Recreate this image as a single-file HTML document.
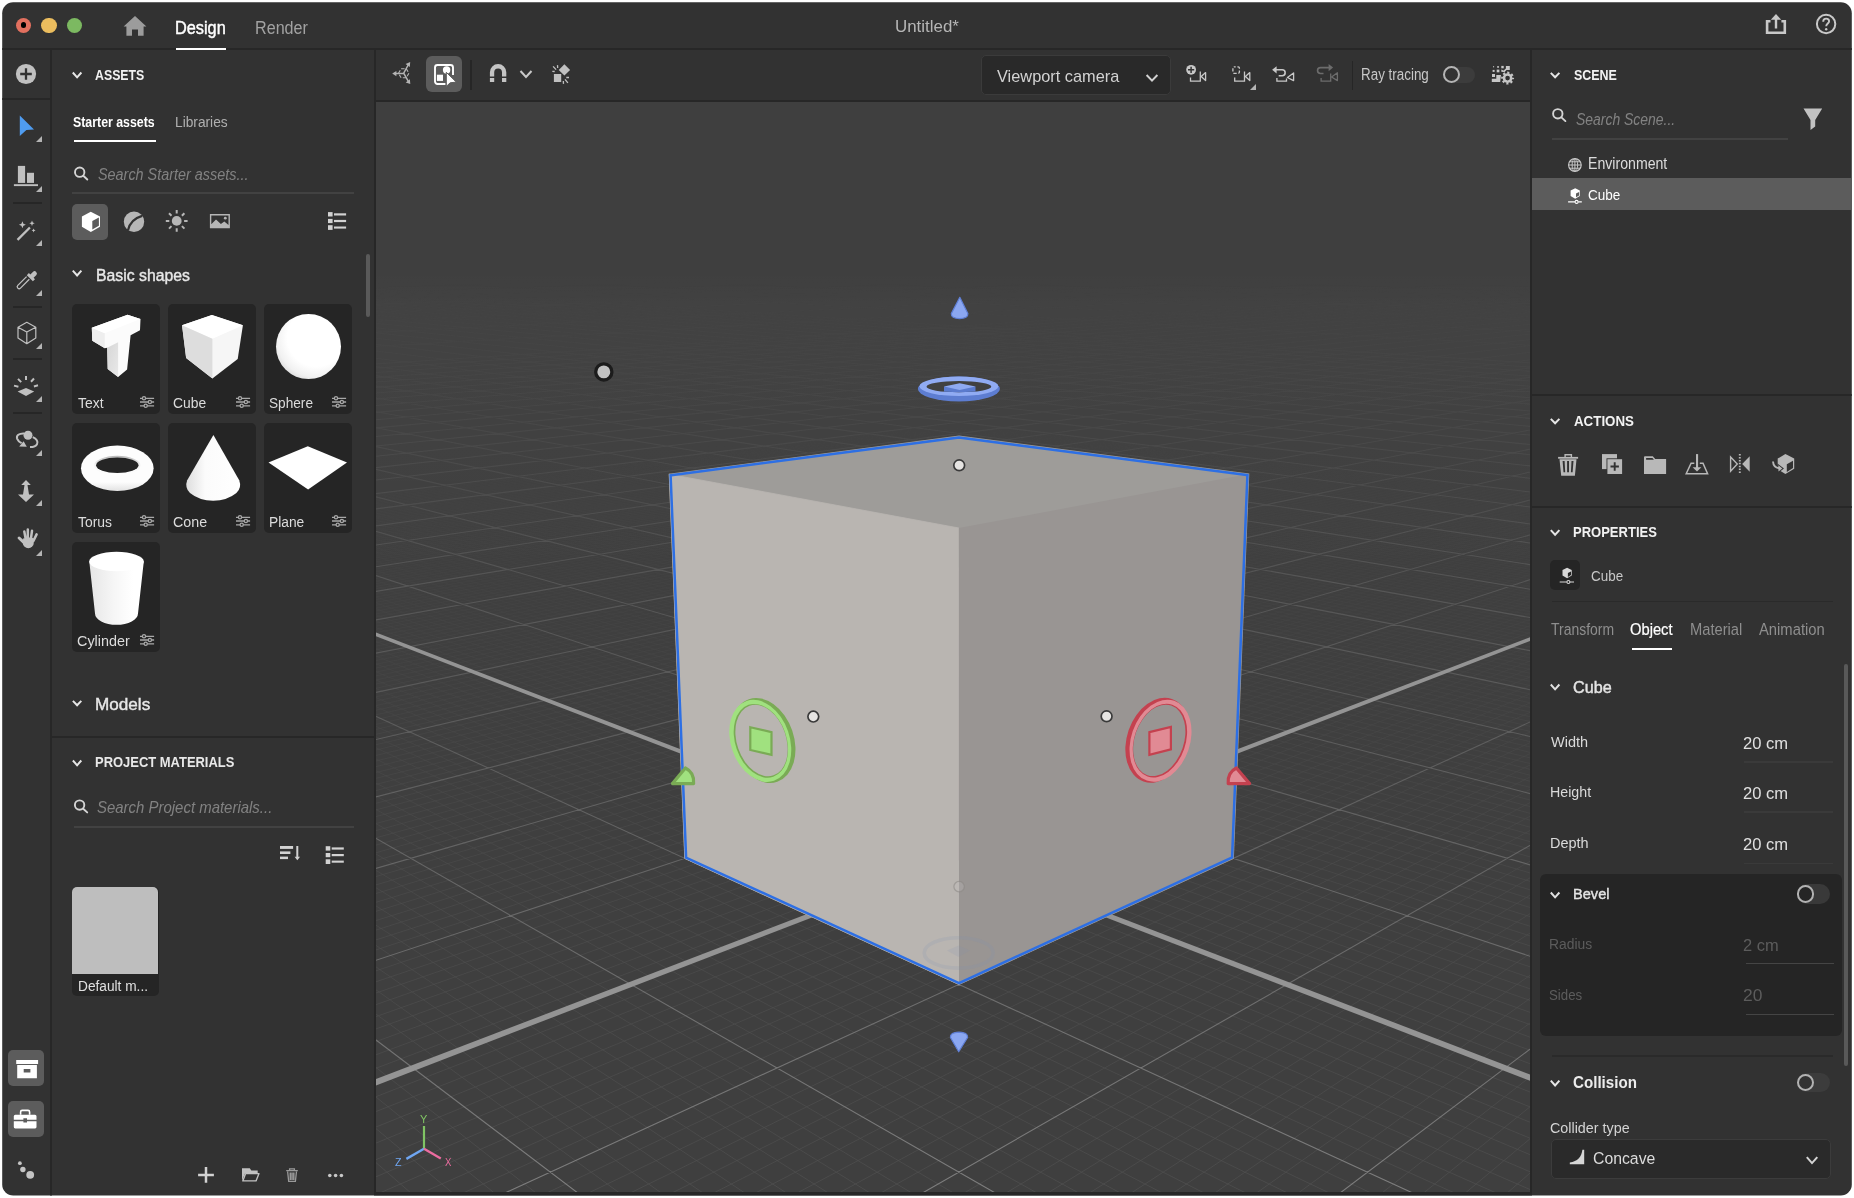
<!DOCTYPE html>
<html lang="en">
<head>
<meta charset="utf-8">
<title>Untitled* - 3D Stager</title>
<style>
html,body{margin:0;padding:0;background:#fff;}
body{width:1854px;height:1198px;position:relative;overflow:hidden;font-family:"Liberation Sans",sans-serif;}
#win{position:absolute;left:0;top:0;width:1854px;height:1198px;background:#323232;clip-path:inset(2.2px 2.2px 2.6px 2.2px round 11px);overflow:hidden;}
#win div,#win span,#win svg{position:absolute;}
.t{white-space:pre;line-height:1;transform-origin:0 50%;display:block;}
.b{background:#272727;}
.card{background:#252525;border-radius:5px;width:88px;height:110px;}
.sel{background:#5c5c5c;border-radius:5px;}
.ul{background:#fff;height:2px;}
.ln{height:1px;background:#474747;}
.tri{width:0;height:0;border-left:6px solid transparent;border-bottom:6px solid #b4b4b4;}
.sep{height:1.5px;background:#262626;left:12.5px;width:29.5px;}
svg{overflow:visible;}
</style>
</head>
<body>
<div id="win">
<!-- structural borders -->
<div class="b" style="left:0;top:48px;width:1854px;height:2px"></div>
<div class="b" style="left:50px;top:50px;width:2px;height:1148px"></div>
<div class="b" style="left:0;top:98px;width:50px;height:2px"></div>
<div class="b" style="left:374px;top:50px;width:2px;height:1148px"></div>
<div class="b" style="left:376px;top:100px;width:1154px;height:2px"></div>
<div class="b" style="left:1530px;top:50px;width:2px;height:1148px"></div>
<div class="b" style="left:376px;top:1192px;width:1154px;height:6px"></div>
<div class="b" style="left:52px;top:735.5px;width:322px;height:2px"></div>
<div class="b" style="left:1532px;top:393.5px;width:322px;height:2px"></div>
<div class="b" style="left:1532px;top:505.5px;width:322px;height:2px"></div>

<!-- title bar -->
<div style="left:15.7px;top:17.5px;width:15.6px;height:15.6px;border-radius:50%;background:#e2705f"></div>
<div style="left:20.6px;top:22.4px;width:5.8px;height:5.8px;border-radius:50%;background:#000"></div>
<div style="left:41.2px;top:17.5px;width:15.6px;height:15.6px;border-radius:50%;background:#ebbd5e"></div>
<div style="left:66.7px;top:17.5px;width:15.6px;height:15.6px;border-radius:50%;background:#7cb961"></div>
<div class="ul" style="left:176px;top:48px;width:50px"></div>

<!-- left tool bar -->
<div class="sep" style="top:202.3px"></div>
<div class="sep" style="top:306.3px"></div>
<div class="sep" style="top:358.2px"></div>
<div class="sep" style="top:412px"></div>
<div class="tri" style="left:36px;top:136px"></div>
<div class="tri" style="left:36px;top:186px"></div>
<div class="tri" style="left:36px;top:240px"></div>
<div class="tri" style="left:36px;top:290px"></div>
<div class="tri" style="left:36px;top:342.5px"></div>
<div class="tri" style="left:36px;top:396px"></div>
<div class="tri" style="left:36px;top:450px"></div>
<div class="tri" style="left:36px;top:500px"></div>
<div class="tri" style="left:36px;top:550px"></div>
<div class="sel" style="left:8px;top:1050px;width:36px;height:36px"></div>
<div class="sel" style="left:8px;top:1100.5px;width:36px;height:36px"></div>

<!-- assets panel -->
<div class="ul" style="left:73.8px;top:140px;width:82.2px"></div>
<div class="ln" style="left:72px;top:191.9px;width:282px;height:2.2px;background:#424242"></div>
<div class="sel" style="left:72px;top:204px;width:36px;height:36px"></div>
<div style="left:366px;top:253.5px;width:3.6px;height:63px;border-radius:2px;background:#5a5a5a"></div>
<div class="card" style="left:72px;top:304px"></div>
<div class="card" style="left:168px;top:304px"></div>
<div class="card" style="left:264px;top:304px"></div>
<div class="card" style="left:72px;top:423px"></div>
<div class="card" style="left:168px;top:423px"></div>
<div class="card" style="left:264px;top:423px"></div>
<div class="card" style="left:72px;top:542px"></div>
<div class="ln" style="left:74px;top:826px;width:280px;height:2.2px;background:#424242"></div>
<div style="left:72px;top:887px;width:87px;height:108.5px;border-radius:5px;background:#252525"></div>
<div style="left:72px;top:887px;width:86px;height:87px;border-radius:5px 5px 0 0;background:#bebebe"></div>

<!-- viewport tool bar -->
<div class="sel" style="left:426px;top:55.8px;width:36px;height:36px;border-radius:6px"></div>
<div style="left:470.2px;top:60.3px;width:1.6px;height:29.5px;background:#262626"></div>
<div style="left:981.3px;top:55.3px;width:187.3px;height:37.6px;border:1px solid #3b3b3b;border-radius:5px;background:#292929"></div>
<div style="left:1351.8px;top:61px;width:1.6px;height:29px;background:#262626"></div>
<div style="left:1443.4px;top:67px;width:31.6px;height:16px;border-radius:8px;background:#3c3c3c"></div>
<div style="left:1442.8px;top:66.3px;width:13.2px;height:13.2px;border:2px solid #b4b4b4;border-radius:50%;background:#323232"></div>
<div class="tri" style="left:1249.8px;top:84px"></div>

<svg width="1154" height="1090" viewBox="0 0 1154 1090" style="position:absolute;left:376px;top:102px;display:block;overflow:hidden">
<defs>
<linearGradient id="mfade" x1="0" y1="0" x2="0" y2="1"><stop offset="0.26" stop-color="#000"/><stop offset="0.46" stop-color="#444"/><stop offset="0.73" stop-color="#bbb"/><stop offset="1" stop-color="#fff"/></linearGradient>
<linearGradient id="Mfade" x1="0" y1="0" x2="0" y2="1"><stop offset="0.165" stop-color="#000"/><stop offset="0.27" stop-color="#141414"/><stop offset="0.36" stop-color="#343434"/><stop offset="0.44" stop-color="#5c5c5c"/><stop offset="0.55" stop-color="#6e6e6e"/><stop offset="0.82" stop-color="#bcbcbc"/><stop offset="1" stop-color="#fff"/></linearGradient>
<linearGradient id="haze" x1="0" y1="0" x2="0" y2="1"><stop offset="0.155" stop-color="#fff" stop-opacity="0"/><stop offset="0.185" stop-color="#fff" stop-opacity="0.016"/><stop offset="0.24" stop-color="#fff" stop-opacity="0.016"/><stop offset="0.45" stop-color="#fff" stop-opacity="0"/></linearGradient>
<mask id="mm" maskUnits="userSpaceOnUse" x="0" y="0" width="1154" height="1090"><rect width="1154" height="1090" fill="url(#mfade)"/></mask>
<mask id="MM" maskUnits="userSpaceOnUse" x="0" y="0" width="1154" height="1090"><rect width="1154" height="1090" fill="url(#Mfade)"/></mask>
</defs>
<rect width="1154" height="1090" fill="#3f3f3f"/>
<rect width="1154" height="1090" fill="url(#haze)"/>
<g mask="url(#mm)"><path d="M587.7 320.7L-20 395.6M578.9 320.7L1174 393.8M592.1 321.3L-20 397M574.5 321.3L1174 395.3M596.5 321.8L-20 398.5M570.1 321.8L1174 396.8M600.9 322.3L-20 400.1M565.6 322.3L1174 398.3M605.4 322.9L-20 401.6M561.2 322.9L1174 399.8M609.9 323.4L-20 403.1M556.7 323.4L1174 401.3M614.4 324L-20 404.7M552.1 324L1174 402.9M619 324.5L-20 406.3M547.6 324.6L1174 404.5M623.6 325.1L-20 407.9M543 325.1L1174 406M632.8 326.2L-20 411.1M533.8 326.2L1174 409.3M637.4 326.8L-20 412.7M529.2 326.8L1174 410.9M642.1 327.4L-20 414.4M524.5 327.4L1174 412.6M646.8 327.9L-20 416.1M519.8 328L1174 414.2M651.5 328.5L-20 417.8M515.1 328.5L1174 415.9M656.2 329.1L-20 419.5M510.3 329.1L1174 417.7M661 329.7L-20 421.3M505.6 329.7L1174 419.4M665.8 330.3L-20 423M500.8 330.3L1174 421.1M670.6 330.9L-20 424.8M495.9 330.9L1174 422.9M680.4 332L-20 428.5M486.2 332.1L1174 426.5M685.3 332.6L-20 430.3M481.3 332.7L1174 428.4M690.2 333.2L-20 432.2M476.4 333.3L1174 430.2M695.2 333.8L-20 434.1M471.4 333.9L1174 432.1M700.2 334.5L-20 436M466.4 334.5L1174 434M705.2 335.1L-20 437.9M461.4 335.1L1174 436M710.2 335.7L-20 439.9M456.3 335.7L1174 437.9M715.3 336.3L-20 441.9M451.3 336.4L1174 439.9M720.4 336.9L-20 443.9M446.2 337L1174 441.9M730.7 338.2L-20 448M435.9 338.2L1174 446M735.9 338.8L-20 450.1M430.7 338.9L1174 448M741.1 339.5L-20 452.2M425.5 339.5L1174 450.1M746.3 340.1L-20 454.3M420.2 340.2L1174 452.3M751.6 340.7L-20 456.5M414.9 340.8L1174 454.4M756.9 341.4L-20 458.7M409.6 341.5L1174 456.6M762.3 342L-20 460.9M404.3 342.1L1174 458.8M767.7 342.7L-20 463.2M398.9 342.8L1174 461.1M773.1 343.4L-20 465.5M393.5 343.4L1174 463.4M784 344.7L-20 470.1M382.6 344.8L1174 468M789.5 345.4L-20 472.5M377.1 345.4L1174 470.4M795 346L-20 474.9M371.6 346.1L1174 472.8M800.6 346.7L-20 477.4M366 346.8L1174 475.2M806.2 347.4L-20 479.8M360.4 347.5L1174 477.6M811.8 348.1L-20 482.3M354.8 348.2L1174 480.1M817.5 348.8L-20 484.9M349.1 348.9L1174 482.7M823.2 349.5L-20 487.5M343.4 349.6L1174 485.2M828.9 350.2L-20 490.1M337.7 350.3L1174 487.8M840.5 351.6L-20 495.4M326.1 351.7L1174 493.2M846.3 352.3L-20 498.2M320.3 352.4L1174 495.9M852.2 353L-20 500.9M314.4 353.1L1174 498.6M858.1 353.8L-20 503.7M308.5 353.9L1174 501.4M864 354.5L-20 506.6M302.6 354.6L1174 504.3M870 355.2L-20 509.5M296.6 355.3L1174 507.2M876 355.9L-20 512.4M290.6 356.1L1174 510.1M882.1 356.7L-20 515.4M284.5 356.8L1174 513.1M888.2 357.4L-20 518.4M278.4 357.5L1174 516.1M900.5 358.9L-20 524.6M266.1 359L1174 522.2M906.7 359.7L-20 527.8M259.9 359.8L1174 525.4M912.9 360.5L-20 531M253.7 360.6L1174 528.6M919.2 361.2L-20 534.3M247.4 361.3L1174 531.8M925.6 362L-20 537.6M241 362.1L1174 535.1M931.9 362.8L-20 541M234.7 362.9L1174 538.5M938.3 363.6L-20 544.4M228.3 363.7L1174 541.9M944.8 364.4L-20 547.9M221.8 364.5L1174 545.4M951.3 365.1L-20 551.4M215.3 365.3L1174 548.9M964.4 366.7L-20 558.7M202.2 366.9L1174 556.1M971 367.6L-20 562.4M195.6 367.7L1174 559.8M977.7 368.4L-20 566.2M189 368.5L1174 563.6M984.4 369.2L-20 570.1M182.3 369.3L1174 567.4M991.1 370L-20 574M175.5 370.1L1174 571.3M997.9 370.8L-20 578M168.7 371L1174 575.3M1004.7 371.7L-20 582M161.9 371.8L1174 579.3M1011.6 372.5L-20 586.2M155 372.7L1174 583.5M1018.5 373.4L-20 590.4M148.1 373.5L1174 587.6M1032.5 375.1L-20 599M134.1 375.2L1174 596.2M1039.6 375.9L-20 603.4M127 376.1L1174 600.6M1046.7 376.8L-20 607.9M119.9 377L1174 605.1M1053.9 377.7L-20 612.6M112.8 377.8L1174 609.7M1061.1 378.6L-20 617.2M105.6 378.7L1174 614.4M1068.3 379.4L-20 622M98.3 379.6L1174 619.1M1075.6 380.3L-20 626.9M91 380.5L1174 624M1083 381.2L-20 631.9M83.7 381.4L1174 628.9M1090.4 382.1L-20 636.9M76.3 382.3L1174 634M1105.4 384L-20 647.4M61.3 384.1L1174 644.3M1112.9 384.9L-20 652.7M53.7 385.1L1174 649.7M1120.5 385.8L-20 658.2M46.1 386L1174 655.1M1128.2 386.8L-20 663.8M38.5 386.9L1174 660.7M1135.9 387.7L-20 669.5M30.8 387.9L1174 666.4M1143.7 388.7L-20 675.4M23 388.8L1174 672.2M1151.5 389.6L-20 681.3M15.2 389.8L1174 678.1M1159.4 390.6L-20 687.4M7.3 390.8L1174 684.2M1167.4 391.5L-20 693.6M-0.7 391.7L1174 690.4M1174 396L-20 706.5M-16.7 393.7L1174 703.2M1174 399.1L-20 713.1M-20 396L1174 709.8M1174 402.3L-20 719.9M-20 399.1L1174 716.6M1174 405.6L-20 726.9M-20 402.4L1174 723.5M1174 409L-20 734M-20 405.7L1174 730.6M1174 412.5L-20 741.3M-20 409.1L1174 737.8M1174 416L-20 748.7M-20 412.6L1174 745.2M1174 419.6L-20 756.4M-20 416.2L1174 752.8M1174 423.3L-20 764.2M-20 419.9L1174 760.6M1174 431L-20 780.4M-20 427.5L1174 776.8M1174 435L-20 788.8M-20 431.4L1174 785.2M1174 439.1L-20 797.5M-20 435.5L1174 793.8M1174 443.3L-20 806.4M-20 439.7L1174 802.6M1174 447.6L-20 815.5M-20 443.9L1174 811.6M1174 452.1L-20 824.8M-20 448.3L1174 820.9M1174 456.6L-20 834.4M-20 452.8L1174 830.5M1174 461.3L-20 844.3M-20 457.4L1174 840.3M1174 466.1L-20 854.4M-20 462.2L1174 850.4M1174 476.1L-20 875.5M-20 472.1L1174 871.5M1174 481.4L-20 886.6M-20 477.3L1174 882.4M1174 486.8L-20 897.9M-20 482.6L1174 893.7M1174 492.3L-20 909.6M-20 488.1L1174 905.4M1174 498L-20 921.7M-20 493.7L1174 917.4M1174 503.9L-20 934.1M-20 499.5L1174 929.8M1174 510L-20 946.9M-20 505.5L1174 942.5M1174 516.3L-20 960.2M-20 511.7L1174 955.7M1174 522.8L-20 973.8M-20 518.1L1174 969.3M1174 536.4L-20 1002.5M-20 531.6L1174 997.8M1174 543.5L-20 1017.5M-20 538.7L1174 1012.8M1174 550.9L-20 1033.1M-20 546L1174 1028.3M1174 558.5L-20 1049.3M-20 553.5L1174 1044.4M1174 566.5L-20 1066M-20 561.4L1174 1061M1174 574.7L-20 1083.3M-20 569.5L1174 1078.3M1174 583.2L-20 1101.3M-20 577.9L1174 1096.2M1174 592.1L2.5 1110M-20 586.7L1163.3 1110M1174 601.3L45 1110M-20 595.7L1120.7 1110M1174 620.7L130.1 1110M-20 615L1035.6 1110M1174 631.1L172.7 1110M-20 625.2L993 1110M1174 641.8L215.3 1110M-20 635.9L950.4 1110M1174 653.1L257.8 1110M-20 647L907.9 1110M1174 664.8L300.4 1110M-20 658.6L865.3 1110M1174 677L343 1110M-20 670.7L822.7 1110M1174 689.9L385.5 1110M-20 683.3L780.1 1110M1174 703.3L428.1 1110M-20 696.6L737.6 1110M1174 717.3L470.7 1110M-20 710.5L695 1110M1174 747.5L555.8 1110M-20 740.3L609.9 1110M1174 763.8L598.4 1110M-20 756.4L567.3 1110M1174 780.9L641 1110M-20 773.4L524.8 1110M1174 799L683.5 1110M-20 791.2L482.2 1110M1174 818L726.1 1110M-20 810.1L439.6 1110M1174 838.2L768.7 1110M-20 830L397.1 1110M1174 859.6L811.3 1110M-20 851.1L354.5 1110M1174 882.2L853.8 1110M-20 873.6L312 1110M1174 906.3L896.4 1110M-20 897.4L269.4 1110M1174 959.3L981.6 1110M-20 949.8L184.3 1110M1174 988.6L1024.1 1110M-20 978.8L141.8 1110M1174 1020L1066.7 1110M-20 1009.8L99.2 1110M1174 1053.7L1109.3 1110M-20 1043.2L56.7 1110M1174 1090L1151.9 1110M-20 1079.1L14.1 1110" stroke="#545454" stroke-width="1" fill="none" opacity="0.6"/></g>
<g mask="url(#MM)"><path d="M583.4 141.1L-20 150.3M583.4 141.1L1174 149.8M610.5 141.5L-20 151.4M556.2 141.5L1174 150.9M638.6 141.9L-20 152.6M528.2 142L1174 152.1M667.5 142.4L-20 153.9M499.2 142.4L1174 153.4M697.5 142.8L-20 155.3M469.3 142.9L1174 154.8M728.5 143.3L-20 156.8M438.3 143.3L1174 156.3M760.6 143.7L-20 158.4M406.1 143.8L1174 157.9M793.9 144.2L-20 160.1M372.9 144.3L1174 159.6M828.4 144.7L-20 162M338.4 144.8L1174 161.5M864.2 145.3L-20 164.1M302.6 145.4L1174 163.5M901.4 145.8L-20 166.3M265.5 146L1174 165.7M940 146.4L-20 168.8M226.9 146.5L1174 168.2M980.1 147L-20 171.5M186.8 147.2L1174 170.9M1021.9 147.6L-20 174.5M145 147.8L1174 173.9M1065.3 148.2L-20 177.9M101.6 148.4L1174 177.3M1110.7 148.9L-20 181.7M56.3 149.1L1174 181.1M1157.9 149.6L-20 186M9 149.9L1174 185.3M1174 151.4L-20 190.9M-20 151.3L1174 190.2M1174 154.1L-20 196.5M-20 153.9L1174 195.8M1174 157.2L-20 203.1M-20 157L1174 202.4M1174 160.9L-20 210.8M-20 160.6L1174 210M1174 165.3L-20 220.1M-20 164.9L1174 219.2M1174 170.6L-20 231.4M-20 170.2L1174 230.4M1174 177.2L-20 245.4M-20 176.8L1174 244.4M1174 185.7L-20 263.2M-20 185.2L1174 262.2M1174 187.7L-20 267.4M-20 187.1L1174 266.3M1174 189.8L-20 271.9M-20 189.2L1174 270.7M1174 192L-20 276.6M-20 191.4L1174 275.4M1174 194.4L-20 281.5M-20 193.7L1174 280.4M1174 196.9L-20 286.9M-20 196.2L1174 285.7M1174 199.6L-20 292.5M-20 198.9L1174 291.3M1174 202.5L-20 298.6M-20 201.7L1174 297.3M1174 205.6L-20 305.1M-20 204.8L1174 303.8M1174 208.9L-20 312.1M-20 208L1174 310.7M1174 212.4L-20 319.6M-20 211.5L1174 318.2M1174 216.3L-20 327.7M-20 215.3L1174 326.2M1174 220.4L-20 336.4M-20 219.4L1174 335M1174 225L-20 346M-20 223.9L1174 344.5M1174 229.9L-20 356.4M-20 228.8L1174 354.8M1174 235.3L-20 367.8M-20 234.1L1174 366.1M1174 241.2L-20 380.3M-20 240L1174 378.6M1174 247.8L-20 394.1M-20 246.5L1174 392.4M1174 255.1L-20 409.5M-20 253.7L1174 407.6M1174 263.2L-20 426.6M-20 261.7L1174 424.7M1174 272.4L-20 445.9M-20 270.7L1174 443.9M1174 282.7L-20 467.8M-20 281L1174 465.7M1174 294.6L-20 492.7M-20 292.7L1174 490.5M1174 308.2L-20 521.5M-20 306.2L1174 519.1M1174 324.1L-20 555M-20 321.9L1174 552.5M1174 342.9L-20 594.6M-20 340.4L1174 591.9M1174 365.4L-20 642.1M-20 362.7L1174 639.1M1174 392.9L-20 700M-20 389.8L1174 696.7M1174 427.1L-20 772.2M-20 423.6L1174 768.6M1174 471.1L-20 864.8M-20 467.1L1174 860.8M1174 610.8L87.6 1110M-20 605.2L1078.1 1110M1174 732L513.2 1110M-20 725L652.5 1110M1174 932L939 1110M-20 922.8L226.9 1110" stroke="#8e8e8e" stroke-width="1.1" fill="none" opacity="0.8"/></g>
<polygon points="-6,528.3 1160,974.8 1160,981.1 -6,532" fill="#949494"/><polygon points="-6,979.4 1160,532.9 1160,536.7 -6,985.7" fill="#949494"/>
<polygon points="583,334.2 872.7,372.1 857.3,756.3 583,882.4 308.9,756.4 293.3,372.2" fill="#9e9c99" stroke="#9e9c99" stroke-width="1.2"/>
<polygon points="293.3,372.2 582.9,426 583,882.4 308.9,756.4" fill="#b9b5b1" stroke="#b9b5b1" stroke-width="0.8"/>
<polygon points="582.9,426 872.7,372.1 857.3,756.3 583,882.4" fill="#999593"/>
<clipPath id="cc"><polygon points="583,334.2 872.7,372.1 857.3,756.3 583,882.4 308.9,756.4 293.3,372.2"/></clipPath>
<polygon points="583,334.2 872.7,372.1 857.3,756.3 583,882.4 308.9,756.4 293.3,372.2" fill="none" stroke="#2d6fe4" stroke-width="5" stroke-linejoin="miter" clip-path="url(#cc)"/>
<g transform="translate(-376,-102)">
<!-- light handle -->
<circle cx="603.8" cy="371.9" r="8.1" fill="#c2c2c2" stroke="#1c1c1c" stroke-width="3.3"/>
<!-- top cone -->
<path d="M959.8 297.3 L951.3 313.6 Q951 318.4 959.6 318.6 Q968.2 318.4 967.9 313.6 Z" fill="#8ba7f1" stroke="#5f7fd6" stroke-width="1.2" stroke-linejoin="round"/>
<!-- top ring -->
<ellipse cx="958.9" cy="389" rx="41" ry="12.4" fill="#5d7dd1"/>
<ellipse cx="958.9" cy="386.3" rx="39.4" ry="9.7" fill="#90abf3"/>
<ellipse cx="958.9" cy="386.7" rx="32.4" ry="5.6" fill="#414141"/>
<clipPath id="rh"><ellipse cx="958.9" cy="386.7" rx="32.4" ry="5.6"/></clipPath>
<g clip-path="url(#rh)"><path d="M944 386.5H975.5V394H944Z" fill="#5b7bce"/></g>
<path d="M944 386.5L959.7 383.3L975.5 386.5L959.7 390Z" fill="#8ea9f1"/>
<!-- bottom cone -->
<path d="M958.7 1051.8 L950.4 1037.5 Q950 1032.3 959 1032.1 Q968 1032.3 967.6 1037.5 Z" fill="#8ba7f1" stroke="#5f7fd6" stroke-width="1.2" stroke-linejoin="round"/>
<!-- faint through-cube ring & dot -->
<ellipse cx="958.7" cy="952.9" rx="34.5" ry="15.2" fill="none" stroke="#7f8fb4" stroke-opacity="0.16" stroke-width="3.6"/>
<path d="M947 950.5L958.5 945.5L970 950.5L958.5 957Z" fill="#7f8fb4" fill-opacity="0.14"/>
<circle cx="959.1" cy="886.6" r="5.2" fill="#c8c5c2" fill-opacity="0.25" stroke="#8a8784" stroke-opacity="0.55" stroke-width="1.3"/>
<!-- green ring -->
<g transform="rotate(-19 761.4 740.5)">
<ellipse cx="763" cy="741" rx="30.8" ry="43.6" fill="#7aab55"/>
<ellipse cx="760.2" cy="740.5" rx="29.4" ry="42.2" fill="#a0e17f"/>
<ellipse cx="760.8" cy="740.6" rx="25.6" ry="38" fill="#7aab55"/>
<ellipse cx="761.5" cy="740.6" rx="24.6" ry="36.8" fill="#b9b5b1"/>
</g>
<path d="M750.3 727.2L771.5 732.1V754.9L750.3 750Z" fill="#a0e17f" stroke="#7aab55" stroke-width="2.2" stroke-linejoin="miter"/>
<path d="M672.5 783.6L685.4 768Q694.5 772.5 693.6 783.6Z" fill="#a0e17f" stroke="#7aab55" stroke-width="3.2" stroke-linejoin="round"/>
<!-- red ring -->
<g transform="rotate(19 1159.4 740.3)">
<ellipse cx="1157.8" cy="740.8" rx="30.8" ry="43.6" fill="#c4414f"/>
<ellipse cx="1160.6" cy="740.3" rx="29.4" ry="42.2" fill="#e18a94"/>
<ellipse cx="1160" cy="740.4" rx="25.6" ry="38" fill="#c4414f"/>
<ellipse cx="1159.3" cy="740.4" rx="24.600" ry="36.800" fill="#999593"/>
</g>
<path d="M1149.4 732.1L1170.9 726.9V749.4L1149.4 754.9Z" fill="#e18a94" stroke="#c4414f" stroke-width="2.2" stroke-linejoin="miter"/>
<path d="M1249.6 783.6L1236.4 768Q1227.3 772.5 1228.2 783.6Z" fill="#e18a94" stroke="#c4414f" stroke-width="3.2" stroke-linejoin="round"/>
<!-- face handle dots -->
<circle cx="959.2" cy="465.3" r="5.4" fill="#e6e4e2" stroke="#3a3a3a" stroke-width="1.7"/>
<circle cx="813.3" cy="716.6" r="5.4" fill="#e6e4e2" stroke="#3a3a3a" stroke-width="1.7"/>
<circle cx="1106.6" cy="716.3" r="5.4" fill="#e6e4e2" stroke="#3a3a3a" stroke-width="1.7"/>
<!-- axis gizmo -->
<path d="M424 1148.8V1126" stroke="#80c464" stroke-width="2.2" fill="none"/>
<path d="M424 1148.8L406.4 1158.9" stroke="#6fa6f2" stroke-width="2.4" fill="none"/>
<path d="M424 1148.8L440.8 1158.5" stroke="#ec6ca0" stroke-width="2.4" fill="none"/>
</g>

</svg>

<!-- right panel -->
<div class="ln" style="left:1551.8px;top:137.9px;width:236px;height:2.2px;background:#424242"></div>
<div style="left:1532px;top:178px;width:322px;height:31.6px;background:#5c5c5c"></div>
<div style="left:1550px;top:560.2px;width:30px;height:30px;border-radius:5px;background:#252525"></div>
<div class="ln" style="left:1551.8px;top:600.6px;width:281.5px;height:1.5px;background:#2a2a2a"></div>
<div class="ul" style="left:1631.9px;top:648.1px;width:40px"></div>
<div style="left:1843.7px;top:664.4px;width:4.2px;height:401.4px;border-radius:2px;background:#595959"></div>
<div class="ln" style="left:1744px;top:761px;width:88.5px;height:1.5px;background:#3a3a3a"></div>
<div class="ln" style="left:1744px;top:811.2px;width:88.5px;height:1.5px;background:#3a3a3a"></div>
<div class="ln" style="left:1744px;top:862.7px;width:88.5px;height:1.5px;background:#3a3a3a"></div>
<div style="left:1540px;top:873.7px;width:302.3px;height:162.2px;border-radius:6px;background:#252525"></div>
<div style="left:1797.4px;top:884.2px;width:32.3px;height:19.4px;border-radius:10px;background:#393939"></div>
<div style="left:1796.6px;top:885.2px;width:13.4px;height:13.4px;border:2px solid #b2b2b2;border-radius:50%;background:#252525"></div>
<div class="ln" style="left:1746px;top:963.4px;width:88px;background:#454545"></div>
<div class="ln" style="left:1746px;top:1014px;width:88px;background:#454545"></div>
<div class="ln" style="left:1551.8px;top:1055px;width:281.5px;height:1.5px;background:#2a2a2a"></div>
<div style="left:1797.4px;top:1072.6px;width:32.3px;height:19.4px;border-radius:10px;background:#3c3c3c"></div>
<div style="left:1796.6px;top:1073.7px;width:13.4px;height:13.4px;border:2px solid #b2b2b2;border-radius:50%;background:#323232"></div>
<div style="left:1551.3px;top:1139.2px;width:277.7px;height:37.4px;border:1px solid #3c3c3c;border-radius:5px;background:#2a2a2a"></div>
<svg width="1854" height="1198" viewBox="0 0 1854 1198" style="left:0;top:0">
<g fill="#c0c0c0">
<!-- add -->
<circle cx="26" cy="74" r="10.1"/>
<path d="M26 68.2V79.8M20.2 74H31.8" stroke="#323232" stroke-width="2.3" fill="none"/>
<!-- select arrow -->
<path d="M19.8 115.6L34 129.6L26.4 130L19.8 136Z" fill="#4f9cf0"/>
<!-- align bars -->
<rect x="17.9" y="165.9" width="7.2" height="17"/>
<rect x="27" y="172.8" width="7" height="10.1"/>
<rect x="13.9" y="184.2" width="24.1" height="1.9"/>
<!-- magic wand -->
<path d="M17.5 239.9L29.9 227.5" stroke="#c0c0c0" stroke-width="2.3" fill="none"/>
<path d="M22.4 221.3l1 2.5 2.5 1-2.5 1-1 2.5-1-2.5-2.5-1 2.500-1z"/>
<path d="M32 220.5l.8 1.900 1.900.8-1.900.8-.8 1.900-.8-1.900-1.900-.8 1.900-.8z"/>
<path d="M33.600 228.400l.6 1.400 1.400.6-1.400.6-.6 1.400-.6-1.400-1.400-.6 1.400-.6z"/>
<!-- eyedropper -->
<path d="M29.300 279.300L20.500 288.100a1.900 1.900 0 0 1-2.700-2.700L26.600 276.600" stroke="#c0c0c0" stroke-width="1.300" fill="none"/>
<path d="M26.800 275.200l2.100-2.100 1.400 1.400 2.600-2.600a2.300 2.300 0 0 1 3.300 3.300l-2.600 2.600 1.400 1.400-2.100 2.100z"/>
<!-- cube outline -->
<path d="M26.800 322.300L35.800 327.200V338L26.800 343.700L18 338V327.200ZM18 327.200L26.800 332L35.800 327.200M26.800 332V343.700" stroke="#c0c0c0" stroke-width="1.200" fill="none" stroke-linejoin="round"/>
<!-- light -->
<path d="M17.600 391.500L26 388.100L34.200 391.500L26 396Z"/>
<path d="M26 376.100V380.100M18 378.900L21.200 382.100M34 378.500L31 381.700M14 385.600L18.400 386.700M38 385.300L33.900 386.500" stroke="#c0c0c0" stroke-width="2" fill="none"/>
<!-- orbit -->
<circle cx="28" cy="435.200" r="4.500"/>
<path d="M24.200 433.500C19 433.200 16 435.500 17.200 438.800C17.900 440.600 19.500 442 21.600 443.200" stroke="#c0c0c0" stroke-width="2" fill="none"/>
<path d="M19.200 446.600L23.600 441.300L26.800 446.800Z"/>
<path d="M32.800 437.200C36.500 438.800 38.400 441.600 37 444.200C35.900 446.200 33.200 447 30 447.100" stroke="#c0c0c0" stroke-width="2" fill="none"/>
<!-- dolly -->
<path d="M26 480L30.800 484.900H27.500L29 494.500H34L26 501.900L18 494.500H23L24.500 484.900H21.200Z"/>
<!-- hand -->
<circle cx="28.300" cy="542.700" r="5.500"/>
<path d="M24.300 531.400L25.600 538.500M27.800 529.400V538M32 530.800L31 538M36.600 534.400L33.400 541" stroke="#c0c0c0" stroke-width="2.500" stroke-linecap="round" fill="none"/>
<path d="M19.100 538L24.600 543.200" stroke="#c0c0c0" stroke-width="3" stroke-linecap="round" fill="none"/>
<path d="M22.900 538.500L33.500 538L33.800 542L23.500 543Z"/>
</g>
<g fill="#fff">
<!-- archive -->
<rect x="16.200" y="1060" width="21.900" height="4"/>
<path d="M17.200 1065H36.900V1078.300H17.200ZM23.700 1069V1072.600H30.400V1069Z" fill-rule="evenodd"/>
<!-- toolbox -->
<path d="M13.800 1116.300a1.500 1.500 0 0 1 1.500-1.500H35a1.500 1.500 0 0 1 1.500 1.500V1119.800H27v-1.500h-3.600v1.500H13.800Z"/>
<path d="M13.800 1121.200H23.400v1.300H27v-1.300H36.500V1127a1.400 1.400 0 0 1-1.400 1.400H15.200a1.400 1.400 0 0 1-1.400-1.400Z"/>
<path d="M20.600 1114.800V1112a1.600 1.600 0 0 1 1.600-1.600H28a1.600 1.600 0 0 1 1.600 1.600V1114.800" stroke="#fff" stroke-width="1.600" fill="none"/>
</g>
<g fill="#c4c4c4">
<circle cx="19.900" cy="1163.200" r="1.900"/><circle cx="22.900" cy="1169.500" r="2.700"/><circle cx="30.200" cy="1174.800" r="3.900"/>
</g>
</svg>

<svg width="1854" height="1198" viewBox="0 0 1854 1198" style="left:0;top:0">
<defs>
<radialGradient id="gs" cx="0.62" cy="0.36" r="0.72"><stop offset="0.62" stop-color="#fff"/><stop offset="0.85" stop-color="#f1f1f1"/><stop offset="1" stop-color="#d9d9d9"/></radialGradient>
<linearGradient id="gcl" x1="0" y1="0" x2="1" y2="0"><stop offset="0" stop-color="#e6e6e6"/><stop offset="0.45" stop-color="#f6f6f6"/><stop offset="0.8" stop-color="#fff"/></linearGradient>
<linearGradient id="gcn" x1="0" y1="0" x2="1" y2="0"><stop offset="0" stop-color="#dedede"/><stop offset="0.35" stop-color="#fbfbfb"/><stop offset="1" stop-color="#fff"/></linearGradient>
<linearGradient id="gtl" x1="0" y1="0" x2="1" y2="1"><stop offset="0" stop-color="#d6d6d6"/><stop offset="1" stop-color="#e9e9e9"/></linearGradient>
<radialGradient id="gto" cx="0.5" cy="0.42" r="0.5" gradientTransform="translate(0 0.1) scale(1 0.9)"><stop offset="0.55" stop-color="#bdbdbd"/><stop offset="0.75" stop-color="#fff"/><stop offset="0.9" stop-color="#fff"/><stop offset="1" stop-color="#e4e4e4"/></radialGradient>
<linearGradient id="gti" x1="0" y1="0" x2="0" y2="1"><stop offset="0" stop-color="#b8b8b8"/><stop offset="0.45" stop-color="#f4f4f4"/><stop offset="1" stop-color="#fff"/></linearGradient>
<linearGradient id="gto2" x1="0" y1="0" x2="0" y2="1"><stop offset="0.8" stop-color="#fdfdfd"/><stop offset="1" stop-color="#e2e2e2"/></linearGradient>
</defs>
<!-- Text T -->
<path d="M91.800 327.800L127.600 314.700L140.500 318.900L140 330.300L130.600 335.300L127.100 369.500L118.100 376.900L107.700 369L107.200 347.700L104.800 348.200L92.300 340.700Z" fill="#fbfbfb"/>
<path d="M91.800 327.800L104.800 333.300V348.200L92.300 340.700Z" fill="#eeeeee"/>
<path d="M91.800 327.800L127.600 314.700L140.500 318.900L104.800 333.300Z" fill="#ffffff"/>
<path d="M107.200 347.700L118.100 342.200V376.900L107.700 369Z" fill="url(#gtl)"/>
<!-- Cube -->
<path d="M211.900 314.900L242.900 325.300L237.700 359.100L212.400 378.400L186.100 358.100L182 325.300Z" fill="#f6f6f6"/>
<path d="M211.900 314.900L242.900 325.300L212.400 338.700L182 325.300Z" fill="#ffffff"/>
<path d="M182 325.300L212.400 338.700V378.400L186.100 358.100Z" fill="#dddddd"/>
<!-- Sphere -->
<circle cx="308.500" cy="346.600" r="32.500" fill="url(#gs)"/>
<!-- Torus -->
<ellipse cx="117.300" cy="468.300" rx="36.300" ry="22.800" fill="url(#gto2)"/>
<ellipse cx="117.300" cy="465.600" rx="23.200" ry="9.800" fill="url(#gti)"/>
<ellipse cx="117.300" cy="465.200" rx="21.200" ry="7.800" fill="#252525"/>
<!-- Cone -->
<path d="M213.400 435.100L239.200 480.200Q242 487.500 236.400 493Q227 500.700 213.200 500.700Q199.400 500.700 190 493Q184.400 487.500 187.200 480.200Z" fill="url(#gcn)"/>
<!-- Plane -->
<path d="M268.500 462.600L307.800 446.300L347 462.600L308.100 489.500Z" fill="#fff"/>
<!-- Cylinder -->
<path d="M89.300 561.500L95 613.400A21.500 11.400 0 0 0 138 613.400L143.800 561.500Z" fill="url(#gcl)"/>
<ellipse cx="116.500" cy="561.500" rx="27.300" ry="9.700" fill="#fff"/>
</svg>

<svg width="1854" height="1198" viewBox="0 0 1854 1198" style="left:0;top:0">
<path d="M72.8 72.5L77.1 77.3L81.4 72.5" stroke="#e6e6e6" stroke-width="2" fill="none"/>
<path d="M72.8 270.7L77.1 275.5L81.4 270.7" stroke="#e6e6e6" stroke-width="2" fill="none"/>
<path d="M72.9 700.9L77.1 705.3L81.3 700.9" stroke="#e6e6e6" stroke-width="2" fill="none"/>
<path d="M72.9 760.5L77.1 765.3L81.3 760.5" stroke="#e6e6e6" stroke-width="2" fill="none"/>
<g stroke="#d4d4d4" stroke-width="1.900" fill="none" stroke-linecap="round"><circle cx="79.7" cy="172.2" r="4.700"/><path d="M83.3 175.79999999999998L87.3 179.5"/></g>
<g stroke="#d4d4d4" stroke-width="1.900" fill="none" stroke-linecap="round"><circle cx="79.6" cy="805.1" r="4.700"/><path d="M83.19999999999999 808.7L87.19999999999999 812.4"/></g>
<path d="M90.800 211.700L100 216.500V226.700L90.800 232L81.900 226.700V216.500Z" fill="#fff"/>
<path d="M92.300 220.900L98.900 217.500V225.700L92.300 229.600Z" fill="#5c5c5c"/>
<circle cx="134" cy="221.800" r="10.200" fill="#b6b6b6"/>
<path d="M142.100 215.900C135 218 129.500 223 128 230.300" stroke="#323232" stroke-width="2.200" fill="none"/>
<circle cx="176.700" cy="220.900" r="4.900" fill="#b6b6b6"/>
<path d="M184.1 220.9L187.6 220.9M181.9 226.1L184.4 228.6M176.7 228.3L176.7 231.8M171.5 226.1L169.0 228.6M169.3 220.9L165.8 220.9M171.5 215.7L169.0 213.2M176.7 213.5L176.7 210.0M181.9 215.7L184.4 213.2" stroke="#b6b6b6" stroke-width="2" fill="none"/>
<path d="M209.900 214.100H229.900V228.200H209.900ZM211.300 215.500V224.200L216 219.400L220.900 224L224.300 221.400L228.500 225V215.500Z" fill="#b6b6b6" fill-rule="evenodd"/>
<circle cx="225.300" cy="218.200" r="1.400" fill="#b6b6b6"/>
<g transform="translate(0,0)" fill="#d2d2d2"><rect x="328" y="212.1" width="4.600" height="4.4"/><rect x="334" y="213.3" width="12.100" height="2.2"/><rect x="328" y="218.9" width="4.600" height="4.2"/><rect x="334" y="219.9" width="12.100" height="2.2"/><rect x="328" y="225.2" width="4.600" height="4.7"/><rect x="334" y="226.5" width="12.100" height="2.1"/></g>
<g transform="translate(-2.3,634.1)" fill="#d2d2d2"><rect x="328" y="212.1" width="4.600" height="4.4"/><rect x="334" y="213.3" width="12.100" height="2.2"/><rect x="328" y="218.9" width="4.600" height="4.2"/><rect x="334" y="219.9" width="12.100" height="2.2"/><rect x="328" y="225.2" width="4.600" height="4.7"/><rect x="334" y="226.5" width="12.100" height="2.1"/></g>
<g fill="#d2d2d2"><rect x="280" y="846" width="13.100" height="2.900"/><rect x="280" y="851.400" width="10.400" height="2.600"/><rect x="280" y="856.600" width="8" height="2.500"/><rect x="296.300" y="846" width="2" height="11.500"/><path d="M294.600 856.700H300.100L297.300 860.200Z"/></g>
<g transform="translate(0,0)" stroke="#a8a8a8" stroke-width="1.3" fill="none"><path d="M140 398.300H142.400M145.600 398.300H154.100M140 402H148.300M151.500 402H154.100M140 405.800H144.100M147.300 405.800H154.100"/><circle cx="144" cy="398.300" r="1.600"/><circle cx="149.900" cy="402" r="1.600"/><circle cx="145.700" cy="405.800" r="1.600"/></g>
<g transform="translate(96,0)" stroke="#a8a8a8" stroke-width="1.3" fill="none"><path d="M140 398.300H142.400M145.600 398.300H154.100M140 402H148.300M151.500 402H154.100M140 405.800H144.100M147.300 405.800H154.100"/><circle cx="144" cy="398.300" r="1.600"/><circle cx="149.900" cy="402" r="1.600"/><circle cx="145.700" cy="405.800" r="1.600"/></g>
<g transform="translate(192,0)" stroke="#a8a8a8" stroke-width="1.3" fill="none"><path d="M140 398.300H142.400M145.600 398.300H154.100M140 402H148.300M151.500 402H154.100M140 405.800H144.100M147.300 405.800H154.100"/><circle cx="144" cy="398.300" r="1.600"/><circle cx="149.900" cy="402" r="1.600"/><circle cx="145.700" cy="405.800" r="1.600"/></g>
<g transform="translate(0,119)" stroke="#a8a8a8" stroke-width="1.3" fill="none"><path d="M140 398.300H142.400M145.600 398.300H154.100M140 402H148.300M151.500 402H154.100M140 405.800H144.100M147.300 405.800H154.100"/><circle cx="144" cy="398.300" r="1.600"/><circle cx="149.900" cy="402" r="1.600"/><circle cx="145.700" cy="405.800" r="1.600"/></g>
<g transform="translate(96,119)" stroke="#a8a8a8" stroke-width="1.3" fill="none"><path d="M140 398.300H142.400M145.600 398.300H154.100M140 402H148.300M151.500 402H154.100M140 405.800H144.100M147.300 405.800H154.100"/><circle cx="144" cy="398.300" r="1.600"/><circle cx="149.900" cy="402" r="1.600"/><circle cx="145.700" cy="405.800" r="1.600"/></g>
<g transform="translate(192,119)" stroke="#a8a8a8" stroke-width="1.3" fill="none"><path d="M140 398.300H142.400M145.600 398.300H154.100M140 402H148.300M151.500 402H154.100M140 405.800H144.100M147.300 405.800H154.100"/><circle cx="144" cy="398.300" r="1.600"/><circle cx="149.900" cy="402" r="1.600"/><circle cx="145.700" cy="405.800" r="1.600"/></g>
<g transform="translate(0,238)" stroke="#a8a8a8" stroke-width="1.3" fill="none"><path d="M140 398.300H142.400M145.600 398.300H154.100M140 402H148.300M151.500 402H154.100M140 405.800H144.100M147.300 405.800H154.100"/><circle cx="144" cy="398.300" r="1.600"/><circle cx="149.900" cy="402" r="1.600"/><circle cx="145.700" cy="405.800" r="1.600"/></g>
<path d="M206 1167V1182.800M198.100 1174.900H213.900" stroke="#d2d2d2" stroke-width="2.500" fill="none"/>
<path d="M242 1168.200H249.800L251.300 1170.500H257.700V1173H245.200L242 1180.500Z" fill="#c2c2c2"/>
<path d="M245.600 1173.600H259L256 1180.900H242.800Z" fill="none" stroke="#c2c2c2" stroke-width="1.400" stroke-linejoin="round"/>
<g stroke="#9a9a9a" fill="none" stroke-width="1.300"><path d="M286.200 1170.700H297.800M289.600 1170.500V1168.800H294.400V1170.500"/><path d="M287.600 1171.400L288.700 1181.300H295.400L296.500 1171.400"/><path d="M290.300 1172.500V1180M292.050 1172.500V1180M293.800 1172.500V1180" stroke-width="1.500"/></g>
<g fill="#c8c8c8"><circle cx="329.800" cy="1175.500" r="1.800"/><circle cx="335.600" cy="1175.500" r="1.800"/><circle cx="341.400" cy="1175.500" r="1.800"/></g>
</svg>
<svg width="1854" height="1198" viewBox="0 0 1854 1198" style="left:0;top:0">
<path d="M135 16.100L146.400 26.500H143.600V35.800H138V29.400H132V35.800H126.400V26.500H123.600Z" fill="#9c9c9c"/>
<path d="M1770.500 21.300H1767.100V32.800H1784.800V21.300H1781.400" stroke="#c8c8c8" stroke-width="2.600" fill="none"/>
<path d="M1776 28.500V17.500" stroke="#c8c8c8" stroke-width="2.400" fill="none"/><path d="M1770.800 19.800L1776 14L1781.200 19.800Z" fill="#c8c8c8"/>
<circle cx="1826.100" cy="24" r="9.200" stroke="#c8c8c8" stroke-width="2" fill="none"/>
<path d="M1823.200 21.700C1823.200 19.600 1824.500 18.600 1826.200 18.600C1827.900 18.600 1829.100 19.700 1829.100 21.200C1829.100 23.400 1826.200 23.700 1826.200 26.200" stroke="#c8c8c8" stroke-width="1.900" fill="none"/><circle cx="1826.200" cy="29.300" r="1.200" fill="#c8c8c8"/>
<g stroke="#b4b4b4" stroke-width="1.500" fill="none"><path d="M403.7 73.2L395.500 73.600M403.7 73.2L408.200 65M403.7 73.2L408.300 81.300"/>
<polygon points="408.9,73.2 406.3,77.7 401.1,77.7 398.5,73.2 401.1,68.7 406.3,68.7" stroke-width="1.100" stroke-dasharray="3.5 1.7"/></g>
<path d="M392.200 73.600L396.400 70.900V76.300ZM410.200 62L409.800 67L405.600 64.100ZM410.300 84.100L405.700 82.400L409.900 79.200Z" fill="#b4b4b4"/>
<path d="M453 75V67.500A2.500 2.500 0 0 0 450.500 65H437.500A2.500 2.500 0 0 0 435 67.500V81.500A2.500 2.500 0 0 0 437.500 84H445.500" stroke="#fff" stroke-width="1.900" fill="none"/>
<rect x="436.900" y="74.700" width="6.100" height="6.200" fill="#fff"/><circle cx="446.600" cy="70" r="3.700" fill="#fff"/>
<path d="M446.300 72.300V86.400L450.200 82.800L456.300 82.100Z" fill="#fff" stroke="#5c5c5c" stroke-width="1" stroke-linejoin="round"/>
<path d="M492.050 76.400V72.300A6.050 6.050 0 0 1 504.150 72.300V76.400M492.050 77.900V82M504.150 77.900V82" stroke="#c4c4c4" stroke-width="4.300" fill="none"/>
<path d="M520.500 71L526 77L531.500 71" stroke="#c8c8c8" stroke-width="2" fill="none"/>
<rect x="553.900" y="74" width="7.300" height="8" fill="#c0c0c0"/><path d="M564.400 64.200L570.100 69.900L564.400 75.600L558.700 69.900Z" fill="#c0c0c0"/>
<path d="M553.100 66.400L556.100 69.600M557.500 65.100L557.700 68M552.300 71.300L554.700 71.500M566.300 77.500H569M565 79.400L567.900 82.900M563.300 81L563.500 83.900" stroke="#c0c0c0" stroke-width="1.300" fill="none"/>
<path d="M1146.600 75L1152 80.600L1157.400 75" stroke="#d2d2d2" stroke-width="2" fill="none"/>
<path d="M1190.5 77.5V81.2H1200.3V71.5" stroke="#c8c8c8" stroke-width="1.300" fill="none"/><path d="M1201.2 76.60000000000001L1205.6 72.60000000000001V80.60000000000001Z" stroke="#c8c8c8" stroke-width="1.300" fill="none" stroke-linejoin="round"/>
<circle cx="1191.100" cy="69.800" r="5.600" fill="#323232"/><circle cx="1191.100" cy="69.800" r="4.900" fill="#c8c8c8"/><path d="M1191.100 66.700V72.900M1188 69.800H1194.200" stroke="#323232" stroke-width="1.500" fill="none"/>
<path d="M1234.7 77.5V81.2H1244.5V71.5" stroke="#c8c8c8" stroke-width="1.300" fill="none"/><path d="M1245.4 76.60000000000001L1249.8 72.60000000000001V80.60000000000001Z" stroke="#c8c8c8" stroke-width="1.300" fill="none" stroke-linejoin="round"/>
<rect x="1232.900" y="66.800" width="6.500" height="6.500" rx="1.200" stroke="#c8c8c8" stroke-width="1.300" fill="none" stroke-dasharray="3.200 1.700" stroke-dashoffset="1.600"/>
<path d="M1276.900 78V81.200H1286.500V78.500" stroke="#c8c8c8" stroke-width="1.300" fill="none"/><path d="M1287.400 77.500L1293.600 73V80.600Z" stroke="#c8c8c8" stroke-width="1.300" fill="none" stroke-linejoin="round"/>
<path d="M1276 69.800H1282.200A2.950 2.950 0 0 1 1282.200 75.700H1278.700" stroke="#c8c8c8" stroke-width="1.600" fill="none"/><path d="M1272.100 69.800L1276.600 66.200V73.400Z" fill="#c8c8c8"/>
<path d="M1321.100 78V81.200H1330.700V73.500" stroke="#6c6c6c" stroke-width="1.300" fill="none"/><path d="M1331.600 77L1337.400 72.800V80.600Z" stroke="#6c6c6c" stroke-width="1.300" fill="none" stroke-linejoin="round"/>
<path d="M1329 67.600H1320.500A2.950 2.950 0 0 0 1320.500 73.500H1323.500" stroke="#6c6c6c" stroke-width="1.600" fill="none"/><path d="M1333.100 67.600L1328.600 64V71.200Z" fill="#6c6c6c"/>
<g fill="#c6c6c6"><rect x="1493" y="66.2" width="1.1" height="1.1"/><rect x="1497.2" y="66.1" width="1.7" height="1.7"/><rect x="1501.3" y="65.9" width="2.4" height="2.4"/><rect x="1492.6" y="69.9" width="2" height="2"/><rect x="1496.7" y="69.6" width="2.7" height="2.7"/><rect x="1492" y="74" width="3" height="3"/>
<path d="M1505.900 65.900H1509.800V70.100H1506.500L1504.500 72.200L1501.300 71.800V69.400L1503.700 70.500L1505.900 68.500Z"/>
<path d="M1491.800 78.800H1496.300V74.900H1501L1500.200 81.900H1491.800Z"/></g>
<circle cx="1507.600" cy="78.100" r="6.700" fill="#323232"/><circle cx="1507.600" cy="78.100" r="3.600" stroke="#c6c6c6" stroke-width="2.600" fill="none"/><circle cx="1507.600" cy="78.100" r="5.400" stroke="#c6c6c6" stroke-width="2.200" fill="none" stroke-dasharray="2.120 2.120" stroke-dashoffset="1.060"/>
<path d="M1550.8 72.9L1555.1 77.3L1559.4 72.9" stroke="#e6e6e6" stroke-width="2" fill="none"/>
<path d="M1550.8 418.9L1555.1 423.3L1559.4 418.9" stroke="#e6e6e6" stroke-width="2" fill="none"/>
<path d="M1550.8 530.1L1555.1 534.7L1559.4 530.1" stroke="#e6e6e6" stroke-width="2" fill="none"/>
<path d="M1550.8 684.5L1555.1 689.3L1559.4 684.5" stroke="#e0e0e0" stroke-width="2" fill="none"/>
<path d="M1550.8 892.5L1555.1 897.3L1559.4 892.5" stroke="#e0e0e0" stroke-width="2" fill="none"/>
<path d="M1550.8 1080.7L1555.1 1085.5L1559.4 1080.7" stroke="#e8e8e8" stroke-width="2" fill="none"/>
<path d="M1806.8 1157.1L1812.0 1163.1L1817.3 1157.1" stroke="#d4d4d4" stroke-width="2" fill="none"/>
<g stroke="#d4d4d4" stroke-width="1.900" fill="none" stroke-linecap="round"><circle cx="1557.8" cy="113.8" r="4.700"/><path d="M1561.3999999999999 117.39999999999999L1565.3999999999999 121.1"/></g>
<path d="M1803.500 108.400H1822.200L1815.200 119.900V126.500L1810.500 130V119.900Z" fill="#c2c2c2"/>
<g stroke="#c8c8c8" fill="none" stroke-width="1.200"><circle cx="1574.900" cy="165" r="6.300"/><ellipse cx="1574.900" cy="165" rx="2.800" ry="6.300" stroke-width="1"/><path d="M1574.900 158.700V171.300M1568.600 165H1581.200M1569.600 161.800H1580.200M1569.600 168.200H1580.200" stroke-width="1"/></g>
<path d="M1575.2 188.20000000000002L1579.8 190.4V196.0L1575.2 198.70000000000002L1570.6000000000001 196.0V190.4Z" fill="#fff"/><path d="M1576.0 193.5L1579.1000000000001 191.9V195.5L1576.0 197.3Z" fill="#5c5c5c"/>
<path d="M1568.100 201.900H1575M1578.200 201.900H1581.800" stroke="#fff" stroke-width="1.200"/><circle cx="1576.600" cy="201.900" r="1.500" stroke="#fff" stroke-width="1.100" fill="none"/>
<path d="M1567.1 567.8L1571.6999999999998 570V575.6L1567.1 578.3L1562.5 575.6V570Z" fill="#d8d8d8"/><path d="M1567.8999999999999 573.1L1571.0 571.5V575.1L1567.8999999999999 576.9Z" fill="#252525"/>
<path d="M1559.700 582H1566.800M1570 582H1574" stroke="#d8d8d8" stroke-width="1.200"/><circle cx="1568.400" cy="582" r="1.500" stroke="#d8d8d8" stroke-width="1.100" fill="none"/>
<g fill="#b8b8b8"><rect x="1558.100" y="456.900" width="20" height="1.800"/><path d="M1564.400 457V454.100H1572.100V457H1570.700V455.500H1565.800V457Z"/><path d="M1559.500 459.200H1576.500L1574.900 475.800H1561.200ZM1562.600 461.100L1563.500 472.300H1565.200L1564.600 461.100ZM1567.100 461.100V472.300H1569V461.100ZM1571.500 461.100L1570.900 472.300H1572.600L1573.500 461.100Z" fill-rule="evenodd"/></g>
<rect x="1602" y="454.100" width="15" height="15" fill="#b8b8b8"/><rect x="1606.500" y="458.300" width="16.300" height="16.400" fill="#323232"/><rect x="1607.400" y="459.200" width="14.700" height="14.800" fill="#b8b8b8"/><path d="M1614.700 462.300V470.700M1610.500 466.500H1618.900" stroke="#323232" stroke-width="1.900" fill="none"/>
<path d="M1644 457.200A1 1 0 0 1 1645 456.200H1652.800L1655.200 459H1666.100V474H1644Z" fill="#b8b8b8"/><path d="M1646.100 457.900H1652.500L1653.900 459.700H1646.100Z" fill="#323232"/>
<path d="M1694.300 463.200H1691.100L1686.200 473.700H1707.600L1703 463.200H1699.800" stroke="#b8b8b8" stroke-width="1.500" fill="none"/><rect x="1696" y="454.100" width="2.100" height="14" fill="#b8b8b8"/><path d="M1692.600 467.200H1701.400L1697 471.400Z" fill="#b8b8b8"/>
<path d="M1730.600 456.900L1737.300 464L1730.600 471.200Z" stroke="#b8b8b8" stroke-width="1.400" fill="none"/><path d="M1739.800 454.100V474" stroke="#b8b8b8" stroke-width="1.900" stroke-dasharray="1.500 1.400"/><path d="M1749.700 456.300L1742.200 464.100L1749.700 471.800Z" fill="#b8b8b8"/>
<path d="M1785.400 454.100L1794.200 458.600V468.800L1785.400 474L1777.700 469.400V458.600Z" fill="#b8b8b8"/><path d="M1786.800 464.200L1793 460.700V468.100L1786.800 472Z" fill="#323232"/>
<path d="M1772.600 460.800C1772.600 465.500 1775.500 468 1779.500 468.200" stroke="#323232" stroke-width="4.400" fill="none"/><path d="M1777.400 463.500L1784 468.600L1777.800 473.200Z" fill="#323232"/>
<path d="M1773 461.500C1773.300 465.600 1775.800 467.800 1779 468.200" stroke="#b8b8b8" stroke-width="1.900" fill="none"/><path d="M1778.300 465.300L1782.300 468.600L1778.500 471.500Z" fill="#b8b8b8"/>
<path d="M1584.200 1149.700V1164.200H1569.800V1162.400C1577.500 1161.500 1581.500 1157 1582.400 1149.700Z" fill="#d6d6d6"/>
</svg>

<!-- text -->
<span class="t" style="left:175.1px;top:19px;font-size:18.12px;color:#ffffff;transform:scaleX(0.900);-webkit-text-stroke:0.45px #ffffff">Design</span>
<span class="t" style="left:254.6px;top:19px;font-size:18.12px;color:#a2a2a2;transform:scaleX(0.891)">Render</span>
<span class="t" style="left:895.1px;top:19px;font-size:16.67px;color:#b6b6b6;transform:scaleX(1.015)">Untitled*</span>
<span class="t" style="left:95.1px;top:68px;font-size:13.99px;color:#f2f2f2;transform:scaleX(0.882);font-weight:700">ASSETS</span>
<span class="t" style="left:73.0px;top:114px;font-size:15.07px;color:#ffffff;transform:scaleX(0.820);font-weight:700">Starter assets</span>
<span class="t" style="left:175.1px;top:114px;font-size:15.07px;color:#b0b0b0;transform:scaleX(0.911)">Libraries</span>
<span class="t" style="left:97.8px;top:167px;font-size:16.97px;color:#828282;transform:scaleX(0.849);font-style:italic">Search Starter assets...</span>
<span class="t" style="left:95.6px;top:267px;font-size:16.38px;color:#e8e8e8;transform:scaleX(0.965);-webkit-text-stroke:0.4px #e8e8e8">Basic shapes</span>
<span class="t" style="left:78.4px;top:395px;font-size:15.36px;color:#dcdcdc;transform:scaleX(0.907)">Text</span>
<span class="t" style="left:173.3px;top:395px;font-size:15.36px;color:#dcdcdc;transform:scaleX(0.903)">Cube</span>
<span class="t" style="left:269.3px;top:395px;font-size:15.36px;color:#dcdcdc;transform:scaleX(0.888)">Sphere</span>
<span class="t" style="left:77.9px;top:514px;font-size:15.36px;color:#dcdcdc;transform:scaleX(0.905)">Torus</span>
<span class="t" style="left:173.0px;top:514px;font-size:15.36px;color:#dcdcdc;transform:scaleX(0.929)">Cone</span>
<span class="t" style="left:269.3px;top:514px;font-size:15.36px;color:#dcdcdc;transform:scaleX(0.897)">Plane</span>
<span class="t" style="left:77.0px;top:633px;font-size:15.36px;color:#dcdcdc;transform:scaleX(0.936)">Cylinder</span>
<span class="t" style="left:94.5px;top:697px;font-size:16.52px;color:#e8e8e8;transform:scaleX(1.037);-webkit-text-stroke:0.4px #e8e8e8">Models</span>
<span class="t" style="left:95.2px;top:756px;font-size:13.77px;color:#e8e8e8;transform:scaleX(0.941);font-weight:700">PROJECT MATERIALS</span>
<span class="t" style="left:97.0px;top:800px;font-size:16.81px;color:#828282;transform:scaleX(0.890);font-style:italic">Search Project materials...</span>
<span class="t" style="left:77.7px;top:979px;font-size:14.64px;color:#e0e0e0;transform:scaleX(0.936)">Default m...</span>
<span class="t" style="left:996.9px;top:69px;font-size:16.81px;color:#d2d2d2;transform:scaleX(0.973)">Viewport camera</span>
<span class="t" style="left:1361.4px;top:67px;font-size:15.8px;color:#c8c8c8;transform:scaleX(0.849)">Ray tracing</span>
<span class="t" style="left:1573.7px;top:69px;font-size:13.77px;color:#f2f2f2;transform:scaleX(0.904);font-weight:700">SCENE</span>
<span class="t" style="left:1575.8px;top:111px;font-size:17.1px;color:#828282;transform:scaleX(0.816);font-style:italic">Search Scene...</span>
<span class="t" style="left:1588.2px;top:156px;font-size:15.65px;color:#dcdcdc;transform:scaleX(0.903)">Environment</span>
<span class="t" style="left:1588.0px;top:187px;font-size:15.22px;color:#ffffff;transform:scaleX(0.889)">Cube</span>
<span class="t" style="left:1573.7px;top:415px;font-size:13.91px;color:#f2f2f2;transform:scaleX(0.958);font-weight:700">ACTIONS</span>
<span class="t" style="left:1573.3px;top:526px;font-size:13.77px;color:#f2f2f2;transform:scaleX(0.945);font-weight:700">PROPERTIES</span>
<span class="t" style="left:1590.6px;top:569px;font-size:14.49px;color:#c8c8c8;transform:scaleX(0.927)">Cube</span>
<span class="t" style="left:1551.0px;top:622px;font-size:15.65px;color:#8e8e8e;transform:scaleX(0.893)">Transform</span>
<span class="t" style="left:1629.6px;top:622px;font-size:15.65px;color:#ffffff;transform:scaleX(0.941);-webkit-text-stroke:0.2px #ffffff">Object</span>
<span class="t" style="left:1689.5px;top:622px;font-size:15.65px;color:#8e8e8e;transform:scaleX(0.939)">Material</span>
<span class="t" style="left:1758.9px;top:622px;font-size:15.65px;color:#8e8e8e;transform:scaleX(0.945)">Animation</span>
<span class="t" style="left:1572.7px;top:680px;font-size:16.52px;color:#e4e4e4;transform:scaleX(0.979);-webkit-text-stroke:0.45px #e4e4e4">Cube</span>
<span class="t" style="left:1550.6px;top:734px;font-size:15.22px;color:#dadada;transform:scaleX(0.953)">Width</span>
<span class="t" style="left:1743.1px;top:736px;font-size:15.94px;color:#e0e0e0;transform:scaleX(1.040)">20 cm</span>
<span class="t" style="left:1549.7px;top:784px;font-size:15.22px;color:#dadada;transform:scaleX(0.935)">Height</span>
<span class="t" style="left:1743.1px;top:786px;font-size:15.94px;color:#e0e0e0;transform:scaleX(1.040)">20 cm</span>
<span class="t" style="left:1549.6px;top:835px;font-size:15.22px;color:#dadada;transform:scaleX(0.951)">Depth</span>
<span class="t" style="left:1743.1px;top:837px;font-size:15.94px;color:#e0e0e0;transform:scaleX(1.040)">20 cm</span>
<span class="t" style="left:1572.7px;top:887px;font-size:14.64px;color:#e4e4e4;transform:scaleX(0.997);-webkit-text-stroke:0.4px #e4e4e4">Bevel</span>
<span class="t" style="left:1549.2px;top:936px;font-size:15.22px;color:#5c5c5c;transform:scaleX(0.911)">Radius</span>
<span class="t" style="left:1743.1px;top:938px;font-size:15.94px;color:#5c5c5c;transform:scaleX(1.033)">2 cm</span>
<span class="t" style="left:1549.2px;top:988px;font-size:14.78px;color:#5c5c5c;transform:scaleX(0.897)">Sides</span>
<span class="t" style="left:1743.0px;top:988px;font-size:15.94px;color:#5c5c5c;transform:scaleX(1.094)">20</span>
<span class="t" style="left:1572.8px;top:1075px;font-size:16.96px;color:#ececec;transform:scaleX(0.894);font-weight:700">Collision</span>
<span class="t" style="left:1549.7px;top:1120px;font-size:15.22px;color:#d4d4d4;transform:scaleX(0.941)">Collider type</span>
<span class="t" style="left:1592.8px;top:1151px;font-size:16.52px;color:#dcdcdc;transform:scaleX(0.956)">Concave</span>
<span class="t" style="left:419.8px;top:1114px;font-size:11.3px;color:#80c464;transform:scaleX(0.971)">Y</span>
<span class="t" style="left:395.0px;top:1156px;font-size:11.74px;color:#6fa6f2;transform:scaleX(0.914)">Z</span>
<span class="t" style="left:445.1px;top:1156px;font-size:11.74px;color:#ec6ca0;transform:scaleX(0.812)">X</span>
</div>
</body>
</html>
